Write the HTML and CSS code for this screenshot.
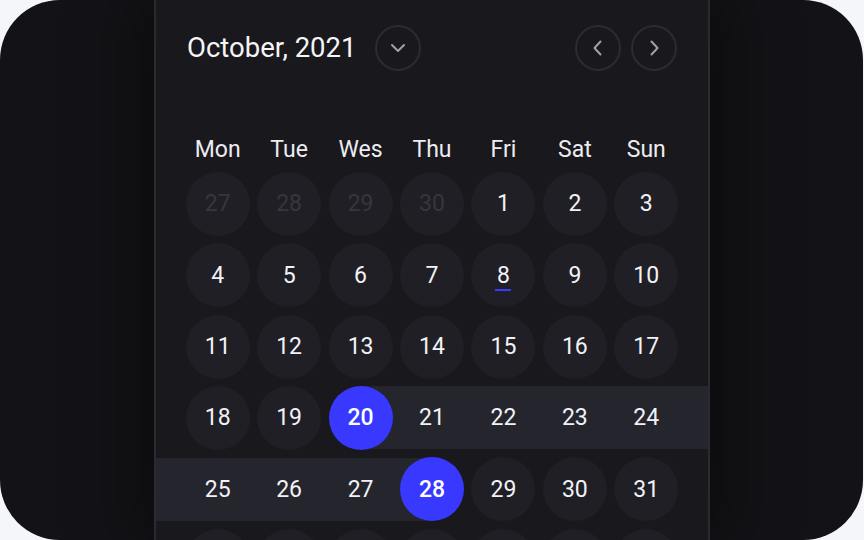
FILE: index.html
```html
<!DOCTYPE html>
<html lang="en">
<head>
<meta charset="utf-8">
<title>Calendar</title>
<link rel="stylesheet" href="styles.css">
</head>
<body>
<div class="frame">
  <div class="panel">
    <div class="header">
      <div class="title-wrap">
        <h1 class="title">October, 2021</h1>
        <button class="icon-btn" aria-label="Choose month">
          <svg width="16" height="10" viewBox="0 0 16 10"><path d="M2 2 L8 8 L14 2" fill="none" stroke="#a0a0aa" stroke-width="2" stroke-linecap="round" stroke-linejoin="round"/></svg>
        </button>
      </div>
      <div class="nav">
        <button class="icon-btn" aria-label="Previous month">
          <svg width="10" height="16" viewBox="0 0 10 16"><path d="M7.5 1.5 L1.5 8 L7.5 14.5" fill="none" stroke="#a0a0aa" stroke-width="2" stroke-linecap="round" stroke-linejoin="round"/></svg>
        </button>
        <button class="icon-btn" aria-label="Next month">
          <svg width="10" height="16" viewBox="0 0 10 16"><path d="M2.5 1.5 L8.5 8 L2.5 14.5" fill="none" stroke="#a0a0aa" stroke-width="2" stroke-linecap="round" stroke-linejoin="round"/></svg>
        </button>
      </div>
    </div>
    <div class="weekdays">
      <div>Mon</div><div>Tue</div><div>Wes</div><div>Thu</div><div>Fri</div><div>Sat</div><div>Sun</div>
    </div>
    <div class="days">
      <div class="day muted"><span>27</span></div>
      <div class="day muted"><span>28</span></div>
      <div class="day muted"><span>29</span></div>
      <div class="day muted"><span>30</span></div>
      <div class="day"><span>1</span></div>
      <div class="day"><span>2</span></div>
      <div class="day"><span>3</span></div>

      <div class="day"><span>4</span></div>
      <div class="day"><span>5</span></div>
      <div class="day"><span>6</span></div>
      <div class="day"><span>7</span></div>
      <div class="day today"><span>8</span></div>
      <div class="day"><span>9</span></div>
      <div class="day"><span>10</span></div>

      <div class="day"><span>11</span></div>
      <div class="day"><span>12</span></div>
      <div class="day"><span>13</span></div>
      <div class="day"><span>14</span></div>
      <div class="day"><span>15</span></div>
      <div class="day"><span>16</span></div>
      <div class="day"><span>17</span></div>

      <div class="day"><span>18</span></div>
      <div class="day"><span>19</span></div>
      <div class="day selected range-start"><span>20</span></div>
      <div class="day in-range"><span>21</span></div>
      <div class="day in-range"><span>22</span></div>
      <div class="day in-range"><span>23</span></div>
      <div class="day in-range ext-right"><span>24</span></div>

      <div class="day in-range ext-left"><span>25</span></div>
      <div class="day in-range divider"><span>26</span></div>
      <div class="day in-range"><span>27</span></div>
      <div class="day selected range-end"><span>28</span></div>
      <div class="day"><span>29</span></div>
      <div class="day"><span>30</span></div>
      <div class="day"><span>31</span></div>

      <div class="day muted"><span>1</span></div>
      <div class="day muted"><span>2</span></div>
      <div class="day muted"><span>3</span></div>
      <div class="day muted"><span>4</span></div>
      <div class="day muted"><span>5</span></div>
      <div class="day muted"><span>6</span></div>
      <div class="day muted"><span>7</span></div>
    </div>
  </div>
</div>
</body>
</html>
```
FILE: styles.css
```css
html, body {
  margin: 0;
  padding: 0;
}
body {
  background: #f5f6fa;
  font-family: Roboto, "Noto Sans", "Liberation Sans", sans-serif;
}
.frame {
  width: 863px;
  height: 540px;
  border-radius: 60px;
  background: #131317;
  overflow: hidden;
  display: flex;
  padding-left: 154px;
  box-sizing: border-box;
}
.panel {
  flex-shrink: 0;
  width: 556px;
  box-sizing: border-box;
  border-left: 2px solid #2a2a31;
  border-right: 2px solid #2a2a31;
  background: #18181d;
  padding: 25px 26px 0;
  box-shadow: 0 0 70px 12px rgba(0, 0, 0, 0.45);
}
.header {
  display: flex;
  align-items: center;
  justify-content: space-between;
  padding: 0 5px;
  height: 46px;
}
.title-wrap {
  display: flex;
  align-items: center;
  gap: 19px;
}
.title {
  margin: 0;
  font-size: 27.5px;
  font-weight: 400;
  color: #f5f5f8;
  line-height: 46px;
}
.icon-btn {
  width: 46px;
  height: 46px;
  box-sizing: border-box;
  border-radius: 50%;
  border: 2px solid #2b2b32;
  background: transparent;
  padding: 0;
  display: flex;
  align-items: center;
  justify-content: center;
}
.nav {
  display: flex;
  gap: 10px;
}
.weekdays {
  display: grid;
  grid-template-columns: repeat(7, 1fr);
  margin-top: 61px;
  height: 36px;
  line-height: 36px;
  text-align: center;
  font-size: 23px;
  color: #ececf1;
}
.days {
  display: grid;
  grid-template-columns: repeat(7, 1fr);
  grid-auto-rows: 71.43px;
}
.day {
  display: flex;
  align-items: center;
  justify-content: center;
}
.day span {
  position: relative;
  width: 64px;
  height: 64px;
  border-radius: 50%;
  background: #1f1f25;
  display: flex;
  align-items: center;
  justify-content: center;
  font-size: 23px;
  color: #f2f2f6;
}
.muted span {
  color: #36363f;
}
.today span::after {
  content: "";
  position: absolute;
  left: 24px;
  top: 46px;
  width: 16px;
  height: 2px;
  background: #3a3aff;
}
.in-range {
  margin: 0 -1px;
  background: linear-gradient(#25252e, #25252e) center / 100% 63px no-repeat;
}
.in-range span {
  background: transparent;
}
.range-start {
  background: linear-gradient(#25252e, #25252e) right center / 50% 63px no-repeat;
}
.range-end {
  background: linear-gradient(#25252e, #25252e) left center / 50% 63px no-repeat;
}
.selected span {
  background: #3838ff;
  color: #ffffff;
  font-weight: 500;
}
.ext-right {
  margin-right: -26px;
  padding-right: 25px;
}
.ext-left {
  margin-left: -26px;
  padding-left: 25px;
}
.divider {
  background:
    linear-gradient(#1d1d23, #1d1d23) left -3px center / 1px 63px no-repeat,
    linear-gradient(#25252e, #25252e) center / 100% 63px no-repeat;
}
```
